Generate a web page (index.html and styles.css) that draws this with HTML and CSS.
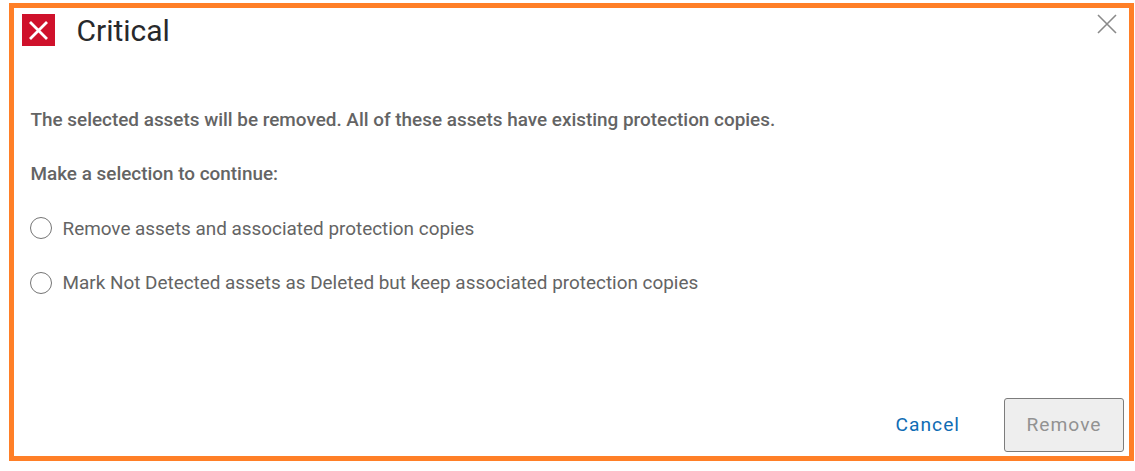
FILE: index.html
```html
<!DOCTYPE html>
<html lang="en">
<head>
    <meta charset="UTF-8">
    <title>Critical</title>
    <link rel="stylesheet" href="styles.css">
</head>
<body>
    <div class="dialog">
        <div class="dialog-header">
            <span class="critical-icon">
                <svg width="33" height="32" viewBox="0 0 33 32">
                    <path d="M8 8 L25 25 M25 8 L8 25" stroke="#fff" stroke-width="2.8" fill="none"/>
                </svg>
            </span>
            <h1 class="dialog-title">Critical</h1>
            <button class="close-button" aria-label="Close">
                <svg width="20" height="20" viewBox="0 0 20 20">
                    <path d="M1 1 L19 19 M19 1 L1 19" stroke="#8a8a8a" stroke-width="1.6" fill="none"/>
                </svg>
            </button>
        </div>
        <div class="dialog-body">
            <p class="message">The selected assets will be removed. All of these assets have existing protection copies.</p>
            <p class="message">Make a selection to continue:</p>
            <label class="radio-row"><span class="radio"></span>Remove assets and associated protection copies</label>
            <label class="radio-row"><span class="radio"></span>Mark Not Detected assets as Deleted but keep associated protection copies</label>
        </div>
        <div class="dialog-footer">
            <button class="cancel-button">Cancel</button>
            <button class="remove-button" disabled>Remove</button>
        </div>
    </div>
</body>
</html>
```

FILE: styles.css
```css
body {
    font-family: Roboto, sans-serif;
    margin: 0;
    background: #fff;
}

.dialog {
    box-sizing: border-box;
    display: flex;
    flex-direction: column;
    width: 1125px;
    height: 458px;
    margin: 3px 0 0 9px;
    border: 5px solid #ff7f27;
    background: #fff;
}

.dialog-header {
    display: flex;
    align-items: flex-start;
    padding: 6px 12px 0 8px;
}

.critical-icon {
    display: flex;
    width: 33px;
    height: 32px;
    background: #cf112b;
}

.dialog-title {
    flex: 1;
    margin: 0 0 0 21.5px;
    font-size: 30px;
    font-weight: 400;
    line-height: 34px;
    color: #28292b;
}

.close-button {
    display: flex;
    padding: 0;
    margin-top: 0;
    border: none;
    background: none;
}

.dialog-body {
    flex: 1;
    padding: 60.5px 0 0 16.5px;
}

.message {
    margin: 0 0 32.3px;
    font-size: 18.9px;
    font-weight: 500;
    line-height: 22px;
    color: #646464;
}

.radio-row {
    display: flex;
    align-items: center;
    gap: 11px;
    height: 22px;
    margin: 0 0 32.5px -1px;
    font-size: 18.9px;
    color: #646464;
}

.radio {
    box-sizing: border-box;
    width: 22px;
    height: 22px;
    border: 1px solid #757575;
    border-radius: 50%;
}

.dialog-footer {
    display: flex;
    justify-content: flex-end;
    align-items: center;
    gap: 44px;
    padding: 0 5px 4px 0;
}

.cancel-button {
    padding: 0 0 2px;
    border: none;
    background: none;
    font-family: inherit;
    font-size: 19.2px;
    letter-spacing: 1px;
    color: #0f6cb4;
}

.remove-button {
    width: 120px;
    height: 54px;
    padding: 0 0 2px;
    border: 1px solid #7c7c7c;
    border-radius: 3px;
    background: #eeeeee;
    font-family: inherit;
    font-size: 19.2px;
    letter-spacing: 1px;
    color: #929292;
}
```
